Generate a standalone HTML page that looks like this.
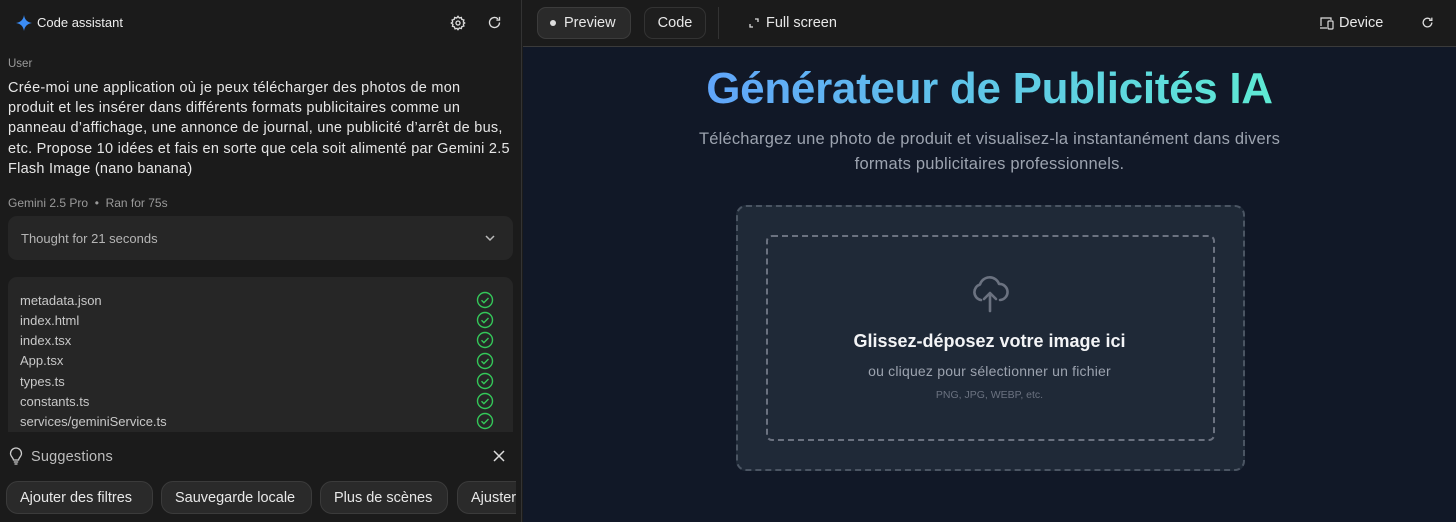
<!DOCTYPE html>
<html><head><meta charset="utf-8"><style>
*{box-sizing:border-box;margin:0;padding:0}
body{width:1456px;height:522px;overflow:hidden;background:#1b1b1b;font-family:"Liberation Sans",sans-serif;position:relative;color:#e3e3e3}
.a{position:absolute;white-space:nowrap}
#left{position:absolute;left:0;top:0;width:522px;height:522px;background:#1b1b1b;border-right:1px solid #333}
#right{position:absolute;left:523px;top:0;width:933px;height:522px;background:#111827}
#bar{position:absolute;left:0;top:0;width:933px;height:47px;background:#1b1b1b;border-bottom:1px solid #3a3a3a}
.btn{position:absolute;top:7px;height:32px;border:1px solid #333;border-radius:9px;font-size:14.5px;line-height:31px;color:#e8e8e8;padding:0 12px}
.chip{position:absolute;top:481px;height:33px;background:#2a2a2a;border:1px solid #3b3b3b;border-radius:12px;font-size:14.5px;line-height:33px;color:#e8e8e8;padding:0 13px;white-space:nowrap}
.f{position:absolute;left:20px;font-size:13px;color:#c8c8c8;line-height:16px;margin-top:1px}
.ck{position:absolute;left:476px}
</style></head><body>
<div id="left">
  <svg class="a" style="left:16px;top:15px" width="16" height="16" viewBox="0 0 16 16"><path d="M8 0C8.6 4.6 11.4 7.4 16 8 11.4 8.6 8.6 11.4 8 16 7.4 11.4 4.6 8.6 0 8 4.6 7.4 7.4 4.6 8 0Z" fill="#3b8cf5"/></svg>
  <div class="a" style="left:37px;top:15px;font-size:13px;color:#eee">Code assistant</div>
  <svg class="a" style="left:450px;top:15px" width="16" height="16" viewBox="0 0 24 24" fill="none" stroke="#ddd" stroke-width="2"><circle cx="12" cy="12" r="3"/><path d="M12 2l2 2.5 3-.8.8 3 3 .8-.8 3L22 12l-2 1.5.8 3-3 .8-.8 3-3-.8L12 22l-1.5-2-3 .8-.8-3-3-.8.8-3L2 12l2-1.5-.8-3 3-.8.8-3 3 .8z"/></svg>
  <svg class="a" style="left:487px;top:15px" width="15" height="15" viewBox="0 0 24 24" fill="none" stroke="#ddd" stroke-width="2.2"><path d="M20 12a8 8 0 1 1-2.5-5.8"/><path d="M20 3v5h-5"/></svg>
  <div class="a" style="left:8px;top:58px;font-size:11.5px;color:#9a9a9a">User</div>
  <div class="a" style="left:8px;top:78px;font-size:14.5px;line-height:20.2px;color:#e6e6e6;letter-spacing:0.25px">Crée-moi une application où je peux télécharger des photos de mon<br>produit et les insérer dans différents formats publicitaires comme un<br>panneau d’affichage, une annonce de journal, une publicité d’arrêt de bus,<br>etc. Propose 10 idées et fais en sorte que cela soit alimenté par Gemini 2.5<br>Flash Image (nano banana)</div>
  <div class="a" style="left:8px;top:196px;font-size:12px;color:#9a9a9a">Gemini 2.5 Pro &nbsp;•&nbsp; Ran for 75s</div>
  <div class="a" style="left:8px;top:216px;width:505px;height:44px;background:#262626;border-radius:9px"></div>
  <div class="a" style="left:21px;top:231px;font-size:13px;color:#b5b5b5">Thought for 21 seconds</div>
  <svg class="a" style="left:484px;top:233px" width="12" height="10" viewBox="0 0 12 10" fill="none" stroke="#bbb" stroke-width="1.5"><path d="M2 3l4 4 4-4"/></svg>
  <div class="a" style="left:8px;top:277px;width:505px;height:155px;background:#262626;border-radius:9px 9px 0 0"></div>
  <div class="f" style="top:292px">metadata.json</div>
  <div class="f" style="top:312px">index.html</div>
  <div class="f" style="top:332px">index.tsx</div>
  <div class="f" style="top:352px">App.tsx</div>
  <div class="f" style="top:373px">types.ts</div>
  <div class="f" style="top:393px">constants.ts</div>
  <div class="f" style="top:413px">services/geminiService.ts</div>
  <svg class="ck" style="top:291px" width="18" height="140" viewBox="0 0 18 140" fill="none" stroke="#34c759" stroke-width="1.4">
    <g id="c"><circle cx="9" cy="9" r="7.5"/><path d="M5.5 9.2l2.4 2.4 4.6-4.6"/></g>
    <use href="#c" y="20"/><use href="#c" y="40"/><use href="#c" y="61"/><use href="#c" y="81"/><use href="#c" y="101"/><use href="#c" y="121"/>
  </svg>
  <svg class="a" style="left:8px;top:447px" width="16" height="18" viewBox="0 0 16 18" fill="none" stroke="#ccc" stroke-width="1.3"><path d="M5.5 13c0-2-3-3.5-3-6.5a5.5 5.5 0 0 1 11 0c0 3-3 4.5-3 6.5z"/><path d="M5.8 15h4.4M6.5 17h3"/></svg>
  <div class="a" style="left:31px;top:449px;font-size:14.5px;color:#bdbdbd;letter-spacing:0.2px">Suggestions</div>
  <svg class="a" style="left:493px;top:450px" width="12" height="12" viewBox="0 0 12 12" stroke="#ddd" stroke-width="1.5"><path d="M1 1l10 10M11 1L1 11"/></svg>
  <div style="position:absolute;left:0;top:470px;width:516px;height:52px;overflow:hidden">
    <div class="chip" style="left:6px;top:11px;width:147px">Ajouter des filtres</div>
    <div class="chip" style="left:161px;top:11px;width:151px">Sauvegarde locale</div>
    <div class="chip" style="left:320px;top:11px;width:128px">Plus de scènes</div>
    <div class="chip" style="left:457px;top:11px;width:120px">Ajuster la taille</div>
  </div>
</div>
<div id="right">
  <div id="bar">
    <div class="btn" style="left:14px;width:94px;background:#2a2a2a;border-color:#3c3c3c;padding-left:26px">Preview</div>
    <div class="a" style="left:27px;top:20px;width:6px;height:6px;border-radius:50%;background:#ddd"></div>
    <div class="btn" style="left:121px;width:62px;background:#1e1e1e;text-align:center;padding:0">Code</div>
    <div class="a" style="left:195px;top:7px;width:1px;height:32px;background:#333"></div>
    <svg class="a" style="left:226px;top:18px" width="10" height="10" viewBox="0 0 10 10" fill="none" stroke="#ddd" stroke-width="1.3"><path d="M1 6v3h3M9 4V1H6"/></svg>
    <div class="a" style="left:243px;top:15px;font-size:14.5px;color:#e8e8e8">Full screen</div>
    <svg class="a" style="left:796px;top:16px" width="16" height="14" viewBox="0 0 16 14" fill="none" stroke="#ddd" stroke-width="1.2"><path d="M2 10V2h10v2M1 12h7"/><rect x="9" y="5" width="5" height="8" rx="1"/></svg>
    <div class="a" style="left:816px;top:15px;font-size:14.5px;color:#e8e8e8">Device</div>
    <svg class="a" style="left:898px;top:16px" width="13" height="13" viewBox="0 0 24 24" fill="none" stroke="#ddd" stroke-width="2.4"><path d="M20 12a8 8 0 1 1-2.5-5.8"/><path d="M20 3v5h-5"/></svg>
  </div>
  <div class="a" style="left:0;width:933px;top:64px;text-align:center;font-size:44px;font-weight:bold;letter-spacing:-0.3px"><span style="background:linear-gradient(90deg,#60a5fa,#5eead4);-webkit-background-clip:text;background-clip:text;color:transparent">Générateur de Publicités IA</span></div>
  <div class="a" style="left:0;width:933px;top:127px;text-align:center;font-size:16.5px;line-height:24.5px;color:#9ca3af;letter-spacing:0.2px">Téléchargez une photo de produit et visualisez-la instantanément dans divers<br>formats publicitaires professionnels.</div>
  <div class="a" style="left:213px;top:205px;width:509px;height:266px;background:#1f2937;border:2px dashed #4b5563;border-radius:10px"></div>
  <div class="a" style="left:243px;top:235px;width:449px;height:206px;border:2px dashed #6b7280;border-radius:6px"></div>
  <svg class="a" style="left:448px;top:273px" width="38" height="40" viewBox="0 0 38 40" fill="none" stroke="#6b7280" stroke-width="2.6" stroke-linecap="round" stroke-linejoin="round"><path d="M10 27a8 8 0 0 1-1-15.5A10 10 0 0 1 28 11a7 7 0 0 1 1 16"/><path d="M19 38V21M13 26l6-6 6 6"/></svg>
  <div class="a" style="left:0;width:933px;top:331px;text-align:center;font-size:18px;font-weight:bold;color:#f3f4f6">Glissez-déposez votre image ici</div>
  <div class="a" style="left:0;width:933px;top:363px;text-align:center;font-size:14px;color:#9ca3af;letter-spacing:0.2px">ou cliquez pour sélectionner un fichier</div>
  <div class="a" style="left:0;width:933px;top:389px;text-align:center;font-size:10.5px;color:#6b7280">PNG, JPG, WEBP, etc.</div>
</div>
</body></html>
